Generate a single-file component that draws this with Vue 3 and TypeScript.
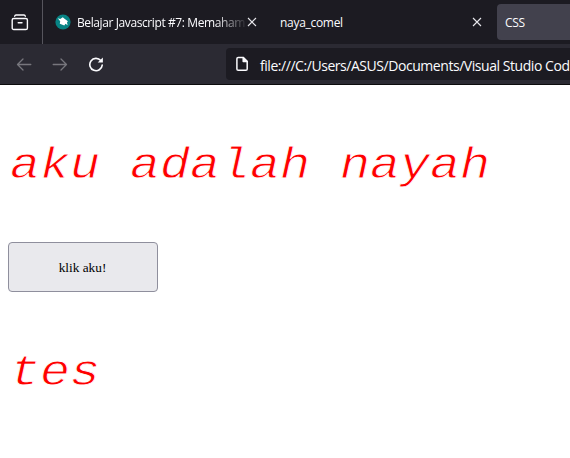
<script setup lang="ts">
interface Tab {
  title: string
  kind: string
  icon?: boolean
  closable?: boolean
}

const tabs: Tab[] = [
  { title: 'Belajar Javascript #7: Memaham', kind: 'first', icon: true, closable: true },
  { title: 'naya_comel', kind: 'second', closable: true },
  { title: 'CSS', kind: 'active' },
]
const address = 'file:///C:/Users/ASUS/Documents/Visual Studio Cod'
</script>

<template>
  <div class="window">
    <header class="tabs">
      <div class="view">
        <svg width="18" height="18" viewBox="0 0 18 18" fill="none" stroke="#fbfbfe" stroke-width="1.4" stroke-linecap="round">
          <path d="M3.7 2.2Q4 1 5 1H13Q14 1 14.3 2.2" />
          <rect x="1.2" y="4.5" width="15.2" height="11" rx="1.6" />
          <path d="M7.2 8.7H11" />
        </svg>
      </div>
      <div v-for="tab in tabs" :key="tab.title" class="tab" :class="tab.kind">
        <svg v-if="tab.icon" class="favicon" width="16" height="16" viewBox="0 0 16 16">
          <circle cx="8" cy="8" r="7.6" fill="#078384" />
          <path d="M2.8 4.2 5.2 5 7.8 3.2 9.2 4.5 12.9 7.3 12 8.5 12.6 11.2 10.5 9.8 9.3 11.6 4.8 9.8 5.2 7.3Z" fill="#fff" />
        </svg>
        <span class="title">{{ tab.title }}</span>
        <svg v-if="tab.closable" class="close" width="10" height="10" viewBox="0 0 10 10" stroke="#e7e7ec" stroke-width="1.1">
          <path d="M1 1 9 9M9 1 1 9" />
        </svg>
      </div>
    </header>
    <nav class="toolbar">
      <svg class="muted" width="16" height="16" viewBox="0 0 16 16"><path d="M14.8 8.5H1.5M7 3 1.5 8.5 7 14" /></svg>
      <svg class="muted" width="16" height="16" viewBox="0 0 16 16"><path d="M1.2 8.5H14.5M9 3 14.5 8.5 9 14" /></svg>
      <svg class="reload" width="16" height="16" viewBox="0 0 16 16">
        <path d="M12.8 4.6A6.2 6.2 0 1 0 14.2 9.1" />
        <path class="head" d="M14.9 1.4V6.6H9.7Z" />
      </svg>
      <div class="address">
        <svg width="14" height="16" viewBox="0 0 14 16" fill="none" stroke="#fbfbfe" stroke-width="1.5" stroke-linejoin="round">
          <path d="M3.2 1.5H8.2L12.2 5.5V13Q12.2 14.3 10.9 14.3H3.2Q1.9 14.3 1.9 13V2.8Q1.9 1.5 3.2 1.5Z" />
          <path d="M8.2 1.5V5.5H12.2Z" fill="#fbfbfe" />
        </svg>
        <span class="url">{{ address }}</span>
      </div>
    </nav>
    <main class="page">
      <p>aku adalah nayah</p>
      <button type="button">klik aku!</button>
      <p>tes</p>
    </main>
  </div>
</template>

<style>
body { margin: 0; background: #fff; overflow: hidden; }
</style>

<style scoped>
.window { width: 570px; height: 458px; overflow: hidden; background: #fff; }
.tabs {
  display: flex; height: 44px; background: #1c1b22; color: #fbfbfe;
  font: 12px/16px "Open Sans", "Noto Sans", sans-serif;
}
.view { box-sizing: border-box; flex: none; width: 43px; height: 44px; padding: 14px 0 0 11px; border-right: 1px solid #56555d; }
.view svg, .favicon, .close { display: block; flex: none; }
.tab { box-sizing: border-box; display: flex; align-items: center; flex: none; height: 44px; white-space: nowrap; }
.title { padding-top: 2px; }
.first { width: 229px; padding-left: 12px; }
.first .title {
  width: 168px; margin-left: 6px; letter-spacing: -.4px;
  mask-image: linear-gradient(to right, #000 138px, transparent 171px);
}
.first .close { margin-left: 2px; }
.second { width: 225px; padding-left: 8px; }
.second .title { width: 192px; letter-spacing: -.3px; }
.active { width: 90px; height: 36px; margin-top: 4px; padding-left: 8px; border-radius: 4px; background: #42414d; letter-spacing: -.3px; }
.toolbar {
  box-sizing: border-box; display: flex; align-items: center; height: 41px; padding-left: 16px; gap: 20px;
  border-bottom: 1px solid #0c0c0d; background: #2b2a33;
}
.toolbar > svg { flex: none; fill: none; stroke-width: 1.3; stroke-linecap: round; stroke-linejoin: round; }
.muted { stroke: #77767d; }
.reload { stroke: #fbfbfe; }
.toolbar > .reload { stroke-width: 1.6; }
.toolbar .head { fill: #fbfbfe; stroke: none; }
.address {
  box-sizing: border-box; display: flex; align-items: center; flex: none; width: 344px; height: 32px;
  margin-left: 102px; padding-left: 9px; gap: 11px; border-radius: 4px 0 0 4px; background: #1c1b22; color: #fbfbfe;
  font: 14px/20px "Open Sans", "Noto Sans", sans-serif; letter-spacing: -.45px; white-space: nowrap;
}
.url { padding-top: 3px; }
.page { display: flow-root; padding: 0 8px; }
p {
  margin: 50px 0; padding-left: 2px; color: #f00; font: italic 50px/57px "Liberation Mono", monospace; white-space: nowrap;
  -webkit-text-stroke: .9px #fff; transform: translateY(2px) scaleY(.88); transform-origin: 0 36px;
}
button {
  display: block; box-sizing: border-box; width: 150px; height: 50px; padding: 1px 5px 0 4px; border: 1px solid #8f8f9d;
  border-radius: 4px; background: #e9e9ed; color: #000; font: 13.333px/15px "Liberation Serif", serif;
}
</style>
